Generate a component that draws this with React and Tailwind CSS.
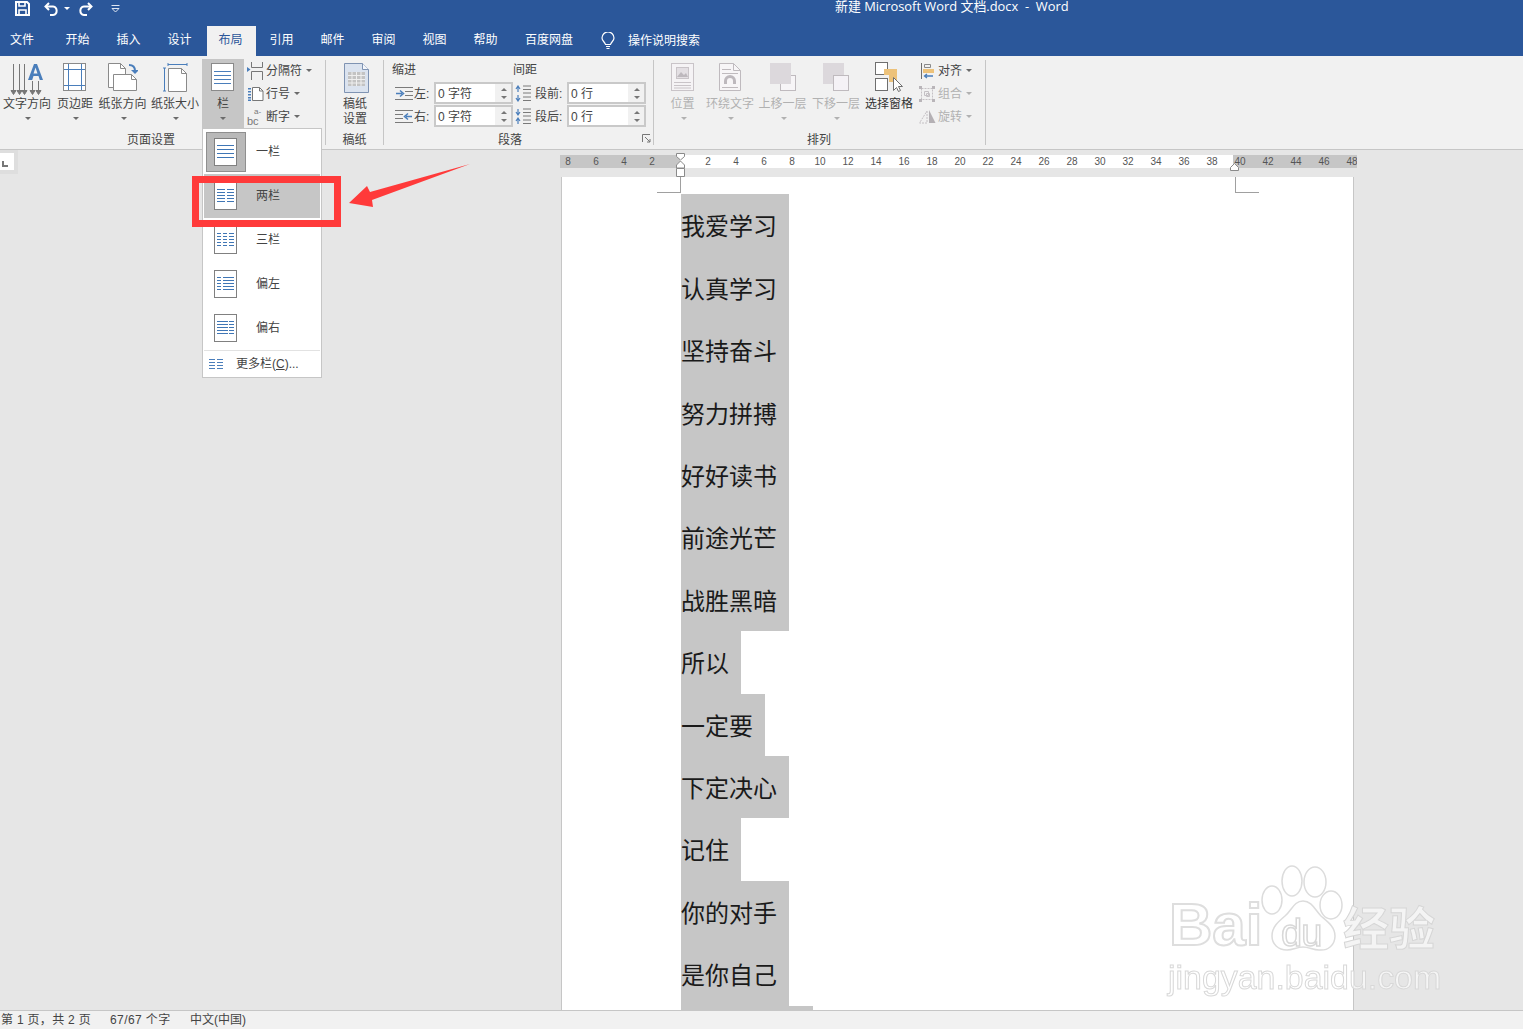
import React from 'react';

const TABS = [
  { label: '文件', w: 'w-[44px] mr-[8px]' },
  { label: '开始', w: 'w-[51px]' },
  { label: '插入', w: 'w-[51px]' },
  { label: '设计', w: 'w-[51px] mr-[2px]' },
  { label: '布局', w: 'w-[49px] pr-[2px]', active: true },
  { label: '引用', w: 'w-[51px]' },
  { label: '邮件', w: 'w-[51px]' },
  { label: '审阅', w: 'w-[51px]' },
  { label: '视图', w: 'w-[51px]' },
  { label: '帮助', w: 'w-[51px]' },
  { label: '百度网盘', w: 'w-[76px]' },
];

const LINES = [
  { text: '我爱学习' }, { text: '认真学习' }, { text: '坚持奋斗' }, { text: '努力拼搏' },
  { text: '好好读书' }, { text: '前途光芒' }, { text: '战胜黑暗' }, { text: '所以' },
  { text: '一定要' }, { text: '下定决心' }, { text: '记住' }, { text: '你的对手' }, { text: '是你自己' },
];

const BLUE = '#4a7ebb';

function Caret({ color = '#6b6b6b' }) {
  return (
    <svg width="6" height="3" viewBox="0 0 6 3" className="shrink-0">
      <path d="M0 0h6L3 3z" fill={color} />
    </svg>
  );
}

/* ---- title bar icons ---- */
function SaveIcon() {
  return (
    <svg width="15" height="15" viewBox="0 0 15 15" fill="none" stroke="#fff" strokeWidth="2">
      <path d="M1 1h11l2 2v11H1z" />
      <path d="M4 1v4h6V1M4 14V9h7v5" strokeWidth="1.6" />
    </svg>
  );
}
function UndoIcon() {
  return (
    <svg width="16" height="14" viewBox="0 0 16 14" fill="none" stroke="#fff" strokeWidth="2">
      <path d="M5 1 1.500 4.500 5 8" />
      <path d="M2 4.500h7a4.300 4.300 0 0 1 0 8.500H6" />
    </svg>
  );
}
function RedoIcon() {
  return (
    <svg width="16" height="14" viewBox="0 0 16 14" fill="none" stroke="#fff" strokeWidth="2">
      <path d="M11 1l3.500 3.500L11 8" />
      <path d="M14 4.500H7a4.300 4.300 0 0 0 0 8.500h3" />
    </svg>
  );
}
function CustomizeIcon() {
  return (
    <svg width="9" height="8" viewBox="0 0 9 8" fill="none" stroke="#dfe6f2">
      <path d="M0.500 0.500h8" />
      <path d="M1 3.500h7L4.500 7z" />
    </svg>
  );
}
function BulbIcon() {
  return (
    <svg width="14" height="18" viewBox="0 0 14 18" fill="none" stroke="#fff" strokeWidth="1.200">
      <path d="M4.500 12.500C4 10 1 9 1 6a6 6 0 0 1 12 0c0 3-3 4-3.500 6.500z" />
      <path d="M5 14.500h4M5.500 16.500h3" />
    </svg>
  );
}

/* ---- ribbon icons ---- */
function TextDirIcon() {
  const arrows = [4, 10, 15, 23, 29];
  return (
    <svg width="36" height="33" viewBox="0 0 36 33" fill="none">
      {arrows.map((x, i) => (
        <g key={x} stroke="#777">
          <path d={`M${x + 0.500} ${i < 3 ? 1 : 18}V31`} />
          <path d={`M${x - 2} 27.500l2.500 4 2.500-4z`} fill="#777" />
        </g>
      ))}
      <path d="M19 17 25 1h3l6 16h-3.200l-1.300-4H24.500l-1.300 4zM24.500 10.500h4L26.500 4.500z" fill={BLUE} fillRule="evenodd" />
    </svg>
  );
}
function MarginIcon() {
  return (
    <svg width="24" height="29" viewBox="0 0 24 29" fill="#fff">
      <rect x="0.500" y="0.500" width="22" height="27" stroke="#8a8a8a" />
      <path d="M5.500 1v26M18.500 1v26M1 6.500h21M1 22.500h21" stroke={BLUE} />
    </svg>
  );
}
function OrientIcon() {
  return (
    <svg width="30" height="30" viewBox="0 0 30 30" fill="#fff" stroke="#8a8a8a">
      <path d="M0.500 0.500h12l5 5v19H0.500z" />
      <path d="M12.500 0.500v5h5" fill="none" />
      <path d="M5.500 11.500h18l5 5v11h-23z" />
      <path d="M23.500 11.500v5h5" fill="none" />
      <path d="M21 2c4 0 6 1.500 6 6" fill="none" stroke={BLUE} strokeWidth="2" />
      <path d="M23 7h8l-4 4z" fill={BLUE} stroke="none" />
    </svg>
  );
}
function SizeIcon() {
  return (
    <svg width="25" height="29" viewBox="0 0 25 29" fill="#fff">
      <path d="M5.500 5.500h13l5 5v18h-18z" stroke="#8a8a8a" />
      <path d="M18.500 5.500v5h5" fill="none" stroke="#8a8a8a" />
      <path d="M5 1.500h19M5 0v3M24 0v3" stroke={BLUE} fill="none" />
      <path d="M1.500 5v23M0 5h3M0 28h3" stroke={BLUE} fill="none" />
    </svg>
  );
}
function ColumnsIcon() {
  return (
    <svg width="24" height="29" viewBox="0 0 24 29" fill="#fff">
      <rect x="0.500" y="0.500" width="22" height="27" stroke="#8a8a8a" />
      <path d="M3 8.500h17M3 12.500h17M3 16.500h17M3 20.500h17" stroke={BLUE} />
    </svg>
  );
}
function BreakIcon() {
  return (
    <svg width="16" height="18" viewBox="0 0 16 18" fill="none" stroke="#777">
      <path d="M4.500 0v5.500h11V0M4.500 18v-8.500h11V18" />
      <path d="M0 5l3.500 2.500L0 10z" fill={BLUE} stroke="none" />
    </svg>
  );
}
function LineNumIcon() {
  return (
    <svg width="17" height="14" viewBox="0 0 17 14" fill="#fff">
      <path d="M5.500 0.500h7l3.500 3.500v9.500H5.500z" stroke="#777" />
      <path d="M12.500 0.500v3.500h3.500" fill="none" stroke="#777" />
      <path d="M1 1h3v1.500H1zM1 4h3v1.500H1zM1 7h3v1.500H1zM1 10h3v1.500H1zM1 12.500h3V14H1z" fill={BLUE} />
    </svg>
  );
}
function HyphenIcon() {
  return (
    <svg width="17" height="17" viewBox="0 0 17 17">
      <text x="7" y="6" fontSize="8" fill="#777" fontFamily="Liberation Sans">a-</text>
      <text x="0" y="16.500" fontSize="11" fill="#777" fontFamily="Liberation Sans">bc</text>
    </svg>
  );
}
function DraftIcon() {
  return (
    <svg width="25" height="30" viewBox="0 0 25 30">
      <path d="M0.500 0.500h18l6 6v23H0.500z" fill="#dbe3ef" stroke="#7f93b2" />
      <path d="M18.500 0.500v6h6" fill="#f5f7fb" stroke="#7f93b2" />
      <path d="M4 9h17v14H4z" fill="#c3c3c3" />
      <path d="M4 12.500h17M4 16.500h17M4 20h17M8 9v14M12.500 9v14M17 9v14" stroke="#efefef" />
    </svg>
  );
}
function PositionIcon() {
  return (
    <svg width="24" height="28" viewBox="0 0 24 28" fill="none" stroke="#c9c4c8">
      <rect x="0.500" y="0.500" width="22" height="27" fill="#f5f3f5" />
      <rect x="5.500" y="4.500" width="12" height="11" fill="#e3dfe3" />
      <path d="M6 14l4-5 3 3 2-2 2 4z" fill="#bdb8bd" stroke="none" />
      <path d="M3 19.500h17M3 22.500h17M3 25h17" />
    </svg>
  );
}
function WrapIcon() {
  return (
    <svg width="22" height="28" viewBox="0 0 22 28" fill="#f7f5f7" stroke="#bfbabe">
      <path d="M0.500 0.500h14l7 7v20H0.500z" />
      <path d="M14.500 0.500v7h7" fill="none" />
      <path d="M3 6.500h9M3 10.500h16M3 24.500h16" fill="none" />
      <path d="M5 21v-3a6 6 0 0 1 12 0v3h-3v-3a3 3 0 0 0-6 0v3z" fill="#bdb8bd" stroke="none" />
    </svg>
  );
}
function ForwardIcon() {
  return (
    <svg width="26" height="28" viewBox="0 0 26 28">
      <rect x="10.500" y="12.500" width="15" height="15" fill="#f7f5f7" stroke="#bfbabe" />
      <rect x="0" y="0" width="21" height="21" fill="#dcd8dc" />
    </svg>
  );
}
function BackwardIcon() {
  return (
    <svg width="26" height="28" viewBox="0 0 26 28">
      <rect x="0" y="0" width="21" height="21" fill="#dcd8dc" />
      <rect x="10.500" y="12.500" width="15" height="15" fill="#f5f2f6" stroke="#bfbabe" />
    </svg>
  );
}
function PaneIcon() {
  return (
    <svg width="28" height="30" viewBox="0 0 28 30" fill="none">
      <rect x="0.500" y="0.500" width="12" height="12" stroke="#6f6f6f" fill="#fff" />
      <rect x="0.500" y="16.500" width="12" height="12" stroke="#6f6f6f" fill="#fff" />
      <path d="M9 7h13v13h-8v-7H9z" fill="#edc27a" />
      <path d="M18.500 15.500v13l3-3 2 4 2-1-2-4h4z" fill="#fff" stroke="#6f6f6f" />
    </svg>
  );
}
function AlignIcon() {
  return (
    <svg width="14" height="16" viewBox="0 0 14 16" fill="none" className="ml-[2px]">
      <path d="M0.500 0v16" stroke="#6f6f6f" />
      <path d="M3.500 1.500h6v3h-6z" stroke="#8a8a8a" />
      <path d="M2 6h11v4H2z" fill="#edc27a" />
      <path d="M12 13H4M6 11l-2.500 2L6 15" stroke={BLUE} strokeWidth="1.300" />
    </svg>
  );
}
function GroupIcon() {
  return (
    <svg width="16" height="16" viewBox="0 0 16 16" fill="none" stroke="#c4c0c4">
      <rect x="2.500" y="2.500" width="11" height="11" strokeDasharray="2 1" />
      <path d="M5.500 5.500h4v4h-4zM7.500 7.500h3v3h-3z" />
      <path d="M0 0h3v3H0zM13 0h3v3h-3zM0 13h3v3H0zM13 13h3v3h-3z" fill="#b9b5b9" stroke="none" />
    </svg>
  );
}
function RotateIcon() {
  return (
    <svg width="17" height="14" viewBox="0 0 17 14" fill="none">
      <path d="M8 1v12H0.500z" stroke="#c4c0c4" strokeDasharray="2 1" />
      <path d="M10 0l6.500 13H10z" fill="#b4b0b4" />
    </svg>
  );
}
function IndentIcon({ dir }) {
  return (
    <svg width="18" height="13" viewBox="0 0 18 13" fill="none">
      {dir === 'left' ? (
        <>
          <path d="M0 0.500h18M10 4.500h8M10 8.500h8M0 12.500h18" stroke="#7a7a7a" />
          <path d="M1 6.500h6M5 3.500l3.500 3-3.500 3" stroke={BLUE} strokeWidth="1.500" />
        </>
      ) : (
        <>
          <path d="M0 0.500h18M0 4.500h8M0 8.500h8M0 12.500h18" stroke="#7a7a7a" />
          <path d="M17 6.500h-6M13 3.500l-3.500 3 3.500 3" stroke={BLUE} strokeWidth="1.500" />
        </>
      )}
    </svg>
  );
}
function SpacingIcon({ after }) {
  return (
    <svg width="16" height="17" viewBox="0 0 16 17" fill="none">
      <path d="M8 1h8M8 4.500h8M8 8h8M8 12h8M8 15.500h8" stroke="#7a7a7a" />
      {after ? (
        <path d="M3 1v5M1 4l2 3 2-3M3 16v-5M1 13l2-3 2 3" stroke={BLUE} strokeWidth="1.200" />
      ) : (
        <path d="M3 7V1.500M1 4l2-3 2 3M3 10v6M1 13l2 3 2-3" stroke={BLUE} strokeWidth="1.200" />
      )}
    </svg>
  );
}

/* ---- dropdown column thumbnails ---- */
function ColThumb({ kind }) {
  const rows = kind === 'one' ? [7, 11, 15, 19] : [7, 10, 13, 16, 19];
  const cols = {
    one: [[3, 20]],
    two: [[3, 11], [13, 20]],
    three: [[3, 7], [9, 13], [15, 20]],
    left: [[3, 7], [9, 20]],
    right: [[3, 14], [15, 20]],
  }[kind];
  const d = rows.flatMap(y => cols.map(([a, b]) => `M${a} ${y + 0.500}H${b}`)).join('');
  return (
    <svg width="23" height="28" viewBox="0 0 23 28" className="shrink-0">
      <rect x="0.500" y="0.500" width="22" height="27" fill="#fff" stroke="#808080" />
      <path d={d} stroke="#3f76b5" fill="none" />
    </svg>
  );
}

/* ---- ribbon building blocks ---- */
function RibbonBtn({ icon, label, className = '', disabled, active }) {
  return (
    <div className={`flex flex-col items-center pt-[4px] h-[72px] shrink-0 ${active ? 'bg-[#c6c6c6]' : ''} ${className}`}>
      <div className="h-[34px] flex items-start justify-center">{icon}</div>
      <div className={`leading-[15px] whitespace-nowrap ${disabled ? 'text-[#b1b1b1]' : 'text-[#444]'}`}>{label}</div>
      <div className={`mt-[5px] ${active ? '' : 'ml-[2px]'}`}><Caret color={disabled ? '#b1b1b1' : '#6b6b6b'} /></div>
    </div>
  );
}

function SmallBtn({ icon, label, disabled, className = '' }) {
  return (
    <div className={`flex items-center h-[23px] ${className}`}>
      <div className="w-[18px] flex justify-start">{icon}</div>
      <span className={`leading-none ml-px ${disabled ? 'text-[#b1b1b1]' : 'text-[#444]'}`}>{label}</span>
      <span className="ml-[4px]"><Caret color={disabled ? '#b1b1b1' : '#6b6b6b'} /></span>
    </div>
  );
}

function Sep() {
  return <div className="w-px h-[85px] mt-[4px] bg-[#c6c6c6] shrink-0" />;
}

function GroupLabel({ children, className = '' }) {
  return <div className={`mt-auto h-[18px] leading-[18px] text-center text-[#444] ${className}`}>{children}</div>;
}

function SpinInput({ value }) {
  return (
    <div className="w-[79px] h-[22px] border-2 border-[#c9c9c9] flex bg-[#f1f1f1]">
      <div className="w-[59px] bg-white leading-[20px] pl-[2px] text-[#444] whitespace-pre">{value}</div>
      <div className="flex-1 flex flex-col items-center justify-center gap-[5px] pl-px">
        <svg width="6" height="3" viewBox="0 0 6 3"><path d="M3 0l3 3H0z" fill="#777" /></svg>
        <svg width="6" height="3" viewBox="0 0 6 3"><path d="M0 0h6L3 3z" fill="#777" /></svg>
      </div>
    </div>
  );
}

function Ruler() {
  const left = [8, 6, 4, 2];
  const mid = [];
  for (let n = 2; n <= 38; n += 2) mid.push(n);
  const right = [40, 42, 44, 46, 48];
  const cell = 'w-[28px] shrink-0 text-center';
  return (
    <div className="ml-[542px] mt-[5px] w-[797px] h-[13px] flex text-[10px] leading-[14px] text-[#555] relative">
      <div className="w-[120px] bg-[#c6c6c6] flex overflow-hidden">
        <div className="flex -ml-[6px]">{left.map(n => <span key={n} className={cell}>{n}</span>)}</div>
      </div>
      <div className="w-[553px] bg-white flex pl-[14px]">
        {mid.map(n => <span key={n} className={cell}>{n}</span>)}
      </div>
      <div className="w-[124px] bg-[#c6c6c6] flex overflow-hidden">
        <div className="flex -ml-[7px]">{right.map(n => <span key={n} className={cell}>{n}</span>)}</div>
      </div>
      {/* indent markers sit on top of the ruler */}
      <svg width="10" height="24" viewBox="0 0 10 24" className="absolute left-[116px] -top-[2px]" fill="#fff" stroke="#8a8a8a">
        <path d="M0.500 0.500h8v3L4.500 7 0.500 3.500z" />
        <path d="M4.500 8l4 4v3h-8v-3z" />
        <path d="M0.500 15.500h8v8h-8z" />
      </svg>
      <svg width="9" height="8" viewBox="0 0 9 8" className="absolute left-[670px] top-[8px]" fill="#fff" stroke="#8a8a8a">
        <path d="M4.500 0.500l4 4v3h-8v-3z" />
      </svg>
    </div>
  );
}

function Watermark() {
  return (
    <div className="absolute left-[1160px] top-[860px] w-[290px] h-[140px] pointer-events-none blur-[0.4px] [font-family:'Liberation_Sans',sans-serif]">
      <svg width="290" height="100" viewBox="0 0 290 100" className="absolute left-0 top-0" fill="#fff" fillOpacity="0.6" stroke="#dcdcdc" strokeWidth="1.500">
        <ellipse cx="132" cy="21" rx="10" ry="15" />
        <ellipse cx="155" cy="22" rx="11" ry="15" />
        <ellipse cx="112" cy="40" rx="10" ry="14" />
        <ellipse cx="171" cy="45" rx="11" ry="14" />
        <path d="M143 41c9 0 12 9 18 15 7 6 14 11 14 20 0 9-7 15-16 14-6 0-10-3-16-3-6 0-10 3-16 3-9 0-15-6-15-14 0-9 6-14 13-20 7-6 9-15 18-15z" />
      </svg>
      <div className="absolute left-[9px] top-[30px] text-[60px] font-bold leading-[70px] text-white/50 [-webkit-text-stroke:2px_#dedede]">Bai</div>
      <div className="absolute left-[121px] top-[54px] text-[38px] font-normal tracking-[-1px] leading-[38px] text-white/50 [-webkit-text-stroke:1.5px_#d8d8d8]">du</div>
      <div className="absolute left-[183px] top-[35px] text-[46px] font-bold leading-[60px] text-[#f4f4f4] [-webkit-text-stroke:1px_#d6d6d6] [font-family:'Noto_Sans_CJK_SC',sans-serif]">经验</div>
      <div className="absolute left-[8px] top-[97px] text-[33.900px] leading-[40px] text-white/60 [-webkit-text-stroke:1px_#d8d8d8] whitespace-nowrap">jingyan.baidu.com</div>
    </div>
  );
}

export default function App() {
  return (
    <div className="relative w-[1523px] h-[1029px] overflow-hidden flex flex-col bg-[#e6e6e6] text-[12px] [font-family:'Liberation_Sans','Noto_Sans_CJK_SC',sans-serif]">
      {/* title + tabs */}
      <div className="h-[56px] bg-[#2b579a] text-white shrink-0 flex flex-col">
        <div className="h-[26px] flex items-start relative">
          <div className="ml-[15px] mt-px"><SaveIcon /></div>
          <div className="ml-[14px] mt-[2px]"><UndoIcon /></div>
          <div className="ml-[4px] mt-[7px]"><Caret color="#fff" /></div>
          <div className="ml-[10px] mt-[2px] -translate-x-[3px]"><RedoIcon /></div>
          <div className="ml-[15px] mt-[5px]"><CustomizeIcon /></div>
          <div className="ml-[715px] -mt-[2px] text-[12.900px] leading-[16px] whitespace-pre [font-family:'Open_Sans','Noto_Sans_CJK_SC',sans-serif]">新建 Microsoft Word 文档.docx  -  Word</div>
        </div>
        <div className="h-[30px] flex items-stretch">
          {TABS.map(t => (
            <div key={t.label} className={`${t.w} shrink-0 text-center leading-[28px] ${t.active ? 'bg-[#f1f1f1] text-[#2b579a]' : ''}`}>{t.label}</div>
          ))}
          <div className="ml-[14px] mt-[6px]"><BulbIcon /></div>
          <div className="ml-[13px] leading-[30px]">操作说明搜索</div>
        </div>
      </div>

      {/* ribbon */}
      <div className="h-[94px] shrink-0 bg-[#f1f1f1] border-b border-[#c6c6c6] flex items-start">
        <div className="w-[325px] h-[93px] flex flex-col shrink-0">
          <div className="flex mt-[3px]">
            <RibbonBtn className="w-[50px] ml-[2px]" icon={<TextDirIcon />} label="文字方向" />
            <RibbonBtn className="w-[46px]" icon={<MarginIcon />} label="页边距" />
            <RibbonBtn className="w-[49px]" icon={<OrientIcon />} label="纸张方向" />
            <RibbonBtn className="w-[50px] ml-[3px]" icon={<SizeIcon />} label="纸张大小" />
            <RibbonBtn className="w-[42px] ml-[2px]" active icon={<ColumnsIcon />} label="栏" />
            <div className="ml-[3px] flex flex-col">
              <SmallBtn icon={<BreakIcon />} label="分隔符" />
              <SmallBtn icon={<LineNumIcon />} label="行号" />
              <SmallBtn icon={<HyphenIcon />} label="断字" />
            </div>
          </div>
          <GroupLabel className="pr-[23px]">页面设置</GroupLabel>
        </div>
        <Sep />
        <div className="w-[57px] h-[93px] flex flex-col items-center shrink-0">
          <div className="mt-[7px] ml-[3px]"><DraftIcon /></div>
          <div className="mt-[4px] ml-[1px] leading-[15px] text-center text-[#444]">稿纸<br />设置</div>
          <GroupLabel>稿纸</GroupLabel>
        </div>
        <Sep />
        <div className="w-[269px] h-[93px] flex flex-col shrink-0 pl-[8px]">
          <div className="flex mt-[7px] h-[14px] leading-[14px] text-[#444]">
            <span className="w-[121px]">缩进</span>
            <span>间距</span>
          </div>
          <div className="flex mt-[5px]">
            <div className="w-[121px] flex flex-col gap-px">
              <div className="flex items-center h-[22px]">
                <span className="w-[22px] pl-[3px] flex"><IndentIcon dir="left" /></span>
                <span className="w-[20px] mt-[2px] text-[#444]">左:</span>
                <SpinInput value="0 字符" />
              </div>
              <div className="flex items-center h-[22px]">
                <span className="w-[22px] pl-[3px] flex"><IndentIcon dir="right" /></span>
                <span className="w-[20px] mt-[2px] text-[#444]">右:</span>
                <SpinInput value="0 字符" />
              </div>
            </div>
            <div className="w-[133px] flex flex-col gap-px">
              <div className="flex items-center h-[22px]">
                <span className="w-[22px] pl-[2px] flex"><SpacingIcon /></span>
                <span className="w-[32px] mt-[2px] text-[#444]">段前:</span>
                <SpinInput value="0 行" />
              </div>
              <div className="flex items-center h-[22px]">
                <span className="w-[22px] pl-[2px] flex"><SpacingIcon after /></span>
                <span className="w-[32px] mt-[2px] text-[#444]">段后:</span>
                <SpinInput value="0 行" />
              </div>
            </div>
          </div>
          <div className="mt-auto flex h-[18px]">
            <div className="w-[236px] text-center leading-[18px] text-[#444]">段落</div>
            <svg width="9" height="9" viewBox="0 0 9 9" fill="none" stroke="#777" className="mt-[3px] ml-[14px]">
              <path d="M0.500 8V0.500H8M3 3l5 5M8 5v3H5" />
            </svg>
          </div>
        </div>
        <Sep />
        <div className="w-[331px] h-[93px] flex flex-col shrink-0">
          <div className="flex mt-[3px] pl-[6px]">
            <RibbonBtn className="w-[45px]" disabled icon={<PositionIcon />} label="位置" />
            <RibbonBtn className="w-[50px]" disabled icon={<WrapIcon />} label="环绕文字" />
            <RibbonBtn className="w-[55px]" disabled icon={<ForwardIcon />} label="上移一层" />
            <RibbonBtn className="w-[52px]" disabled icon={<BackwardIcon />} label="下移一层" />
            <div className="w-[54px] flex flex-col items-center pt-[3px] shrink-0">
              <div className="h-[35px] flex items-start"><PaneIcon /></div>
              <div className="leading-[15px] text-[#333] whitespace-nowrap">选择窗格</div>
            </div>
            <div className="ml-[3px] flex flex-col">
              <SmallBtn icon={<AlignIcon />} label="对齐" />
              <SmallBtn icon={<GroupIcon />} label="组合" disabled />
              <SmallBtn icon={<RotateIcon />} label="旋转" disabled />
            </div>
          </div>
          <GroupLabel className="pr-[1px]">排列</GroupLabel>
        </div>
        <Sep />
      </div>

      {/* document area */}
      <div className="flex-1 min-h-0 flex flex-col overflow-hidden relative">
        <div className="flex h-[27px] shrink-0 items-start">
          <div className="w-[18px] h-[24px] bg-[#dedede] pt-[3px] shrink-0">
            <div className="w-[14px] h-[17px] bg-white flex items-end pl-[2px] pb-[3px]">
              <svg width="6" height="6" viewBox="0 0 6 6"><path d="M0 0h2v4h4v2H0z" fill="#777" /></svg>
            </div>
          </div>
          <Ruler />
        </div>
        <div className="flex-1 min-h-0 ml-[561px] w-[793px] bg-white border-x border-[#c6c6c6] overflow-hidden relative">
          {/* margin crop marks */}
          <div className="absolute left-[95px] top-0 w-[24px] h-[16px] border-r border-b border-[#a0a0a0]" />
          <div className="absolute left-[673px] top-0 w-[24px] h-[16px] border-l border-b border-[#a0a0a0]" />
          <div className="pt-[17.250px] pl-[119px] text-[24px] text-[#1a1a1a] [font-family:'Noto_Sans_CJK_SC',sans-serif]">
            {LINES.map(l => (
              <div key={l.text} className="w-fit h-[62.430px] leading-[62.430px] pr-[12px] bg-[#c6c6c6] whitespace-nowrap">{l.text}</div>
            ))}
            <div className="w-[132px] h-[8px] bg-[#c6c6c6]" />
          </div>
        </div>
      </div>

      {/* status bar */}
      <div className="h-[19px] shrink-0 bg-[#f1f1f1] border-t border-[#c6c6c6] flex items-center pl-px leading-none text-[#444] whitespace-pre">
        <span className="w-[109px] tracking-[0.300px]">第 1 页，共 2 页</span>
        <span className="w-[80px] tracking-[0.400px]">67/67 个字</span>
        <span>中文(中国)</span>
      </div>

      {/* open columns menu */}
      <div className="absolute left-[202px] top-[128px] w-[120px] h-[250px] bg-white border border-[#c6c6c6] p-px text-[#444] flex flex-col">
        {[
          { kind: 'one', label: '一栏', selected: true },
          { kind: 'two', label: '两栏', hover: true },
          { kind: 'three', label: '三栏' },
          { kind: 'left', label: '偏左' },
          { kind: 'right', label: '偏右' },
        ].map(it => (
          <div key={it.kind} className={`h-[44px] flex items-center shrink-0 ${it.hover ? 'bg-[#c6c6c6]' : ''}`}>
            <div className="w-[43px] h-full flex items-center justify-center">
              {it.selected ? (
                <div className="w-[40px] h-[40px] bg-[#b9b9b9] border border-[#8f8f8f] flex items-center justify-center"><ColThumb kind={it.kind} /></div>
              ) : <ColThumb kind={it.kind} />}
            </div>
            <span className="ml-[9px]">{it.label}</span>
          </div>
        ))}
        <div className="h-px bg-[#e2e2e2] shrink-0" />
        <div className="flex items-center flex-1">
          <svg width="14" height="10" viewBox="0 0 14 10" className="ml-[5px]" stroke={BLUE} fill="none">
            <path d="M0 0.500h6M8 0.500h6M0 3.500h6M8 3.500h6M0 6.500h6M8 6.500h6M0 9.500h6M8 9.500h6" />
          </svg>
          <span className="ml-[13px] whitespace-nowrap">更多栏(<span className="underline">C</span>)...</span>
        </div>
      </div>

      {/* annotation */}
      <div className="absolute left-[192px] top-[176px] w-[149px] h-[51px] border-[7px] border-[#ff3a3a]" />
      <svg width="130" height="50" viewBox="0 0 130 50" className="absolute left-[345px] top-[160px]">
        <path d="M4 43 22 26l3 6L125 4 27 40l1 7z" fill="#ff3a3a" />
      </svg>

      <Watermark />
    </div>
  );
}
